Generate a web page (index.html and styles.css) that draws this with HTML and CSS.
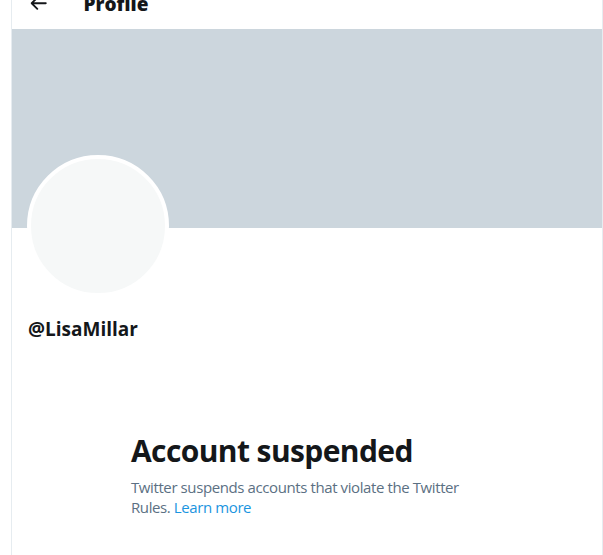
FILE: index.html
```html
<!DOCTYPE html>
<html>
<head>
<meta charset="utf-8">
<link rel="stylesheet" href="styles.css">
</head>
<body>
<main class="column">
  <header class="topbar">
    <svg class="back" viewBox="0 0 24 24"><path d="M20 11H7.414l4.293-4.293c.39-.39.39-1.023 0-1.414s-1.023-.39-1.414 0l-6 6c-.39.39-.39 1.023 0 1.414l6 6c.195.195.45.293.707.293s.512-.098.707-.293c.39-.39.39-1.023 0-1.414L7.414 13H20c.553 0 1-.447 1-1s-.447-1-1-1z"/></svg>
    <h2 class="title">Profile</h2>
  </header>
  <div class="banner"></div>
  <div class="profile">
    <div class="avatar"></div>
    <div class="handle">@LisaMillar</div>
  </div>
  <section class="empty">
    <div class="empty-inner">
      <h1 class="empty-title">Account suspended</h1>
      <p class="empty-text">Twitter suspends accounts that violate the Twitter Rules. <a class="link" href="#">Learn more</a></p>
    </div>
  </section>
</main>
</body>
</html>
```
FILE: styles.css
```css
html, body {
  margin: 0;
  padding: 0;
  background: #ffffff;
  overflow: hidden;
}
body {
  font-family: "Open Sans", "Noto Sans", sans-serif;
  color: #14171a;
  height: 555px;
}
.column {
  margin-left: 11px;
  width: 590px;
  height: 555px;
  border-left: 1px solid #e6ecf0;
  border-right: 1px solid #e6ecf0;
  display: flex;
  flex-direction: column;
}
.topbar {
  height: 29px;
  display: flex;
  align-items: flex-end;
  padding: 0 0 18px 15px;
  box-sizing: border-box;
}
.back {
  width: 22.5px;
  height: 22.5px;
  fill: #14171a;
  margin-bottom: -3px;
  flex: none;
}
.title {
  margin: 0 0 0 34px;
  font-size: 19px;
  font-weight: 800;
  line-height: 24px;
  height: 24px;
  margin-bottom: -5px;
}
.banner {
  height: 199px;
  background: #ccd6dd;
  flex: none;
}
.profile {
  padding: 0 16px;
}
.avatar {
  width: 134px;
  height: 134px;
  border-radius: 50%;
  background: #f6f8f8;
  border: 4px solid #ffffff;
  margin-top: -73px;
  margin-left: -1px;
}
.handle {
  margin-top: 20px;
  font-size: 19px;
  font-weight: 700;
  line-height: 24px;
}
.empty {
  display: flex;
  justify-content: center;
  padding-top: 92px;
}
.empty-inner {
  width: 352px;
}
.empty-title {
  margin: 0;
  font-size: 30px;
  font-weight: 700;
  letter-spacing: -0.6px;
  line-height: 36px;
}
.empty-text {
  margin: 8px 0 0;
  font-size: 15px;
  letter-spacing: -0.4px;
  line-height: 20px;
  color: #5b7083;
}
.link {
  color: #1b95e0;
  text-decoration: none;
}
```
